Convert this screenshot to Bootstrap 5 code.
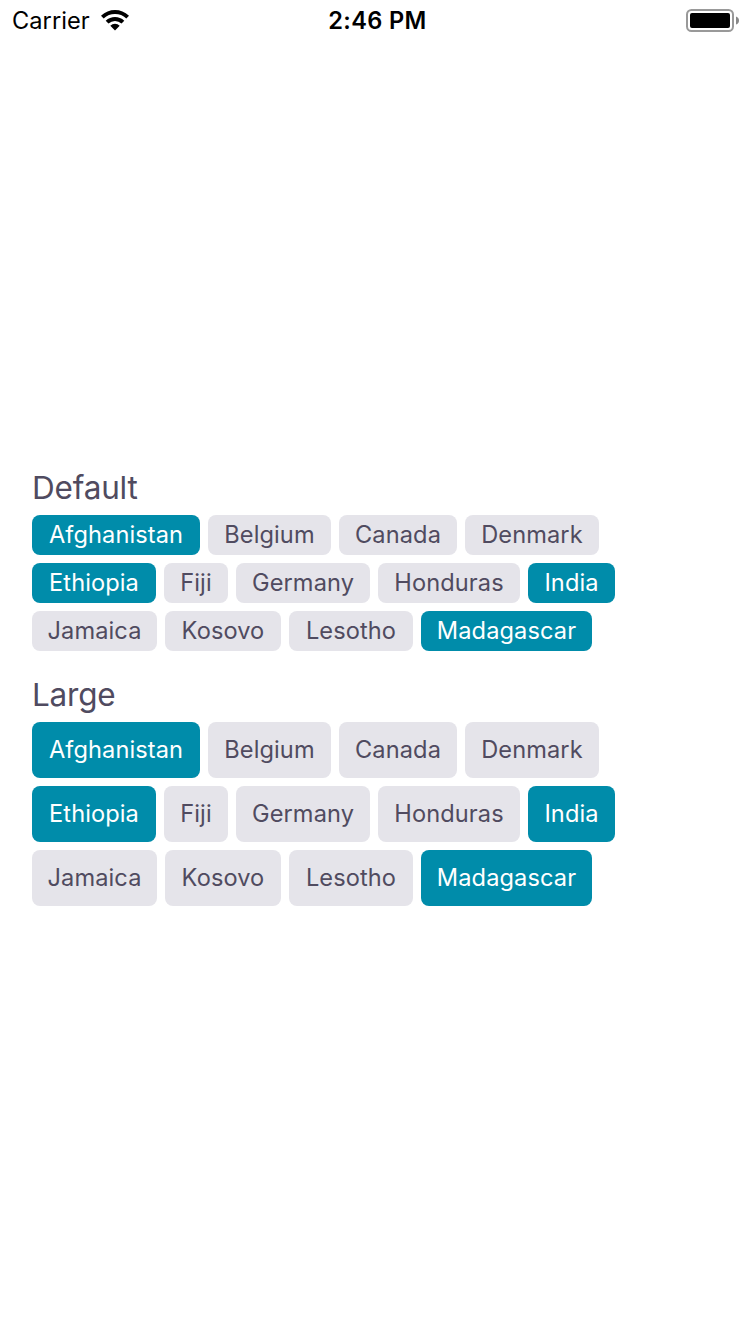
<!DOCTYPE html>
<html lang="en">
<head>
<meta charset="utf-8">
<meta name="viewport" content="width=device-width, initial-scale=1">
<title>Chips</title>
<link href="https://cdn.jsdelivr.net/npm/bootstrap@5.3.0/dist/css/bootstrap.min.css" rel="stylesheet">
<style>
body{font-family:Inter,"Liberation Sans",sans-serif;height:1334px;background:#fff;color:#504b60;overflow:hidden}
.status-bar{height:40px;padding:0 11px 0 12px;color:#000;font-size:24px;line-height:41px}
.status-bar .carrier{font-size:23.6px;letter-spacing:.05px;width:89px}
.status-bar .clock{font-size:23.6px;font-weight:600;letter-spacing:.35px;padding-left:4px}
.status-bar svg{display:block}
.status-bar .battery{margin-bottom:1px}
.chips-page{padding:430px 32px 0}
.chips-title{font-size:31.5px;line-height:36px;font-weight:400;margin:0 0 9px;letter-spacing:-.2px}
.chips-group + .chips-group{margin-top:26px}
.chip{height:40px;padding:0;border:0;border-radius:8px;background:#e5e4ea;color:#504b60;font-size:23.6px;line-height:40px;letter-spacing:.1px;text-align:center;white-space:nowrap}
.chip.active{background:#008caa;color:#fff}
.chips-lg .chip{height:56px;line-height:56px}
.w-afghanistan{width:168px}.w-belgium{width:123px}.w-canada{width:118px}.w-denmark{width:134px}
.w-ethiopia{width:124px}.w-fiji{width:64px}.w-germany{width:134px}.w-honduras{width:142px}.w-india{width:87px}
.w-jamaica{width:125px}.w-kosovo{width:116px}.w-lesotho{width:124px}.w-madagascar{width:171px}
</style>
</head>
<body>
<header class="status-bar row g-0 align-items-center">
  <div class="col d-flex align-items-center"><span class="carrier">Carrier</span>
    <svg width="28" height="22" viewBox="1 0.500 28 22" fill="#000"><path d="M1 6.200Q7.200 .5 15 .5T29 6.200L26.300 9Q21.500 4.600 15 4.600T3.700 9ZM5.700 11.200Q9.800 7.500 15 7.500T24.300 11.200L21.500 14Q18.700 11.500 15 11.500T8.500 14ZM10.300 16.200Q12.300 14.300 15 14.300T19.700 16.200L15 20.900Z"/></svg>
  </div>
  <div class="col-auto clock">2:46 PM</div>
  <div class="col d-flex justify-content-end">
    <svg class="battery" width="54" height="24" viewBox="0 0 54 24"><rect x="2" y="2" width="46" height="21" rx="4.500" fill="none" stroke="#999" stroke-width="2"/><rect x="5" y="5" width="40" height="15" rx="2" fill="#000"/><path d="M51 8.500Q54 9.500 54 12.500T51 16.500Z" fill="#888"/></svg>
  </div>
</header>
<main class="chips-page">
  <section class="chips-group">
    <h2 class="chips-title">Default</h2>
    <div class="d-flex flex-column gap-2">
      <div class="d-flex gap-2"><button class="chip active w-afghanistan">Afghanistan</button><button class="chip w-belgium">Belgium</button><button class="chip w-canada">Canada</button><button class="chip w-denmark">Denmark</button></div>
      <div class="d-flex gap-2"><button class="chip active w-ethiopia">Ethiopia</button><button class="chip w-fiji">Fiji</button><button class="chip w-germany">Germany</button><button class="chip w-honduras">Honduras</button><button class="chip active w-india">India</button></div>
      <div class="d-flex gap-2"><button class="chip w-jamaica">Jamaica</button><button class="chip w-kosovo">Kosovo</button><button class="chip w-lesotho">Lesotho</button><button class="chip active w-madagascar">Madagascar</button></div>
    </div>
  </section>
  <section class="chips-group chips-lg">
    <h2 class="chips-title">Large</h2>
    <div class="d-flex flex-column gap-2">
      <div class="d-flex gap-2"><button class="chip active w-afghanistan">Afghanistan</button><button class="chip w-belgium">Belgium</button><button class="chip w-canada">Canada</button><button class="chip w-denmark">Denmark</button></div>
      <div class="d-flex gap-2"><button class="chip active w-ethiopia">Ethiopia</button><button class="chip w-fiji">Fiji</button><button class="chip w-germany">Germany</button><button class="chip w-honduras">Honduras</button><button class="chip active w-india">India</button></div>
      <div class="d-flex gap-2"><button class="chip w-jamaica">Jamaica</button><button class="chip w-kosovo">Kosovo</button><button class="chip w-lesotho">Lesotho</button><button class="chip active w-madagascar">Madagascar</button></div>
    </div>
  </section>
</main>
<script src="https://cdn.jsdelivr.net/npm/bootstrap@5.3.0/dist/js/bootstrap.bundle.min.js"></script>
</body>
</html>
